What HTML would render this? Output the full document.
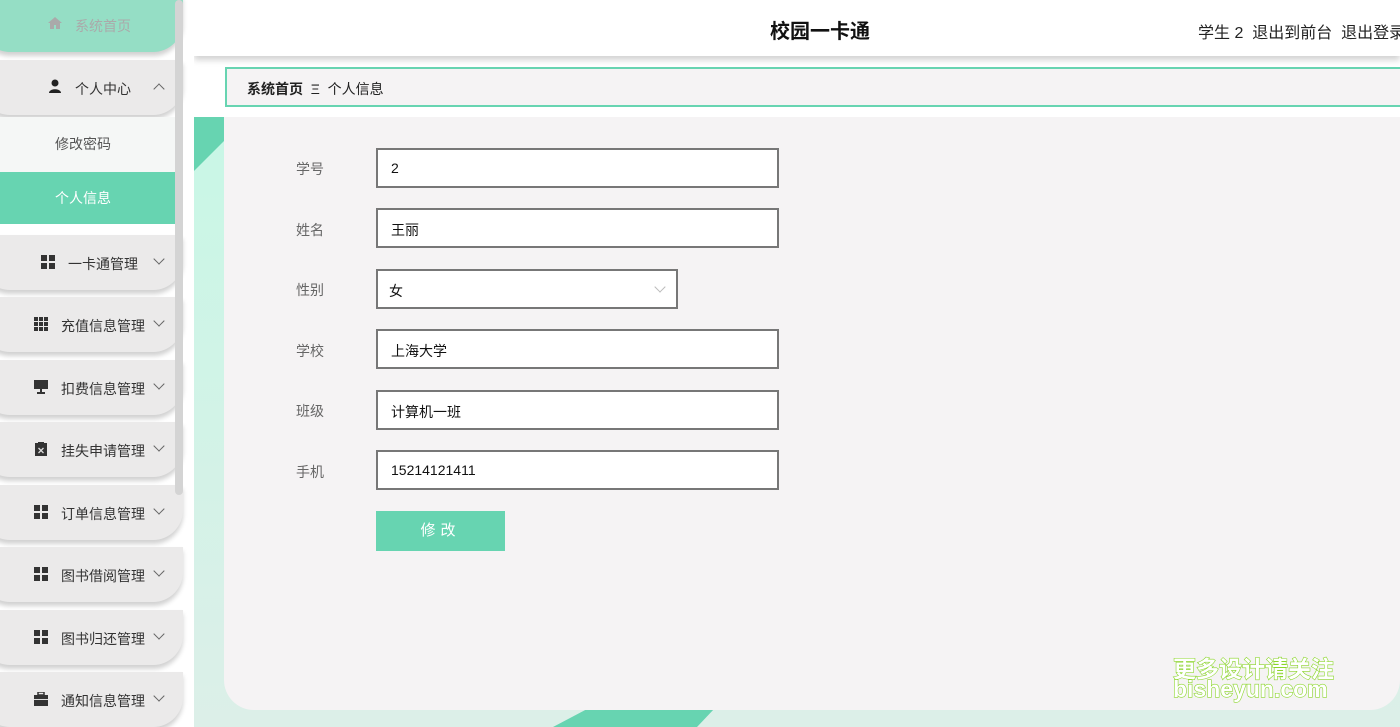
<!DOCTYPE html>
<html><head><meta charset="utf-8"><style>
*{margin:0;padding:0;box-sizing:border-box}
body{width:1400px;height:727px;overflow:hidden;position:relative;background:#fff;font-family:"Liberation Sans","Noto Sans CJK SC",sans-serif;}
.bgmint{position:absolute;left:194px;top:117px;width:1206px;height:610px;background:linear-gradient(180deg,#c8f7e6,#dcefe8)}
.diag1{position:absolute;left:194px;top:117px;width:30px;height:60px;background:#67d4b1;clip-path:polygon(0 0,100% 0,100% 40%,0 90%)}
.diag2{position:absolute;left:535px;top:708px;width:180px;height:19px;background:#67d4b1;clip-path:polygon(10% 100%,30% 0,100% 0,90% 100%)}
.card{position:absolute;left:224px;top:117px;width:1176px;height:593px;background:#f5f3f4;border-radius:0 0 30px 30px}
.header{position:absolute;left:194px;top:0;width:1206px;height:56px;background:#fff;box-shadow:0 4px 6px rgba(0,0,0,.18)}
.title{position:absolute;left:0;width:1252px;top:15px;text-align:center;font-size:20px;font-weight:bold;color:#111}
.bc{position:absolute;left:225px;top:67px;width:1180px;height:40px;border:2px solid #67d4b1;background:#f5f3f4;font-size:14px;color:#222;padding:10px 0 0 20px}
.side{position:absolute;left:0;top:0;width:194px;height:727px;background:#fff}
.sb{position:absolute;left:175px;top:0;width:8px;height:495px;background:#d4d4d4;border-radius:4px}
.item{position:absolute;left:-20px;width:203px;height:55px;background:#ebeaea;border-radius:0 0 30px 30px;box-shadow:0 4px 5px rgba(0,0,0,.18);font-size:14px;color:#333}
.item .t{position:absolute;top:19px;white-space:nowrap}
.item .ic{position:absolute;top:20px;width:14px;height:14px}
.item .ch{position:absolute;top:20px;left:175px;width:8px;height:8px;border-right:1px solid #666;border-bottom:1px solid #666;transform:rotate(45deg)}
.sub{position:absolute;left:0;width:183px;height:55px;font-size:14px;padding-left:55px;line-height:55px}
.lab{position:absolute;left:296px;font-size:14px;color:#666}
.inp{position:absolute;left:376px;width:403px;height:40px;border:2px solid #777;background:#fff;font-size:14px;color:#111;padding:10px 0 0 13px}
.btn{position:absolute;left:376px;top:511px;width:129px;height:40px;background:#67d4b1;color:#fff;font-size:15px;text-align:center;line-height:40px;letter-spacing:5px}
.wm{position:absolute;left:1173px;font-size:23px;font-weight:bold;color:#fff;-webkit-text-stroke:1.2px #8bd62a;paint-order:stroke fill}
</style></head><body>
<div class="bgmint"></div><div class="diag1"></div><div class="diag2"></div>
<div class="card"></div>
<div class="header"><div class="title">校园一卡通</div><div style="position:absolute;left:1004px;top:19px;font-size:16px;color:#222;white-space:nowrap">学生 2&nbsp;&nbsp;退出到前台&nbsp;&nbsp;退出登录</div></div>
<div class="bc"><b>系统首页</b>&nbsp;&nbsp;Ξ&nbsp;&nbsp;个人信息</div>

<div class="side">
<div class="item" style="top:-5px;height:57px;background:#95dec5;"><svg class="ic" style="left:68px;top:21px" viewBox="0 0 14 14"><path d="M7 1L0 7h2v6h4V9h2v4h4V7h2z" fill="#aaa"/></svg><span class="t" style="left:95px;top:21px;color:#aaa">系统首页</span></div>
<div class="item" style="top:60px"><svg class="ic" style="left:68px;top:19px" viewBox="0 0 14 14"><circle cx="7" cy="4" r="3.5" fill="#222"/><path d="M1 14c0-5 12-5 12 0z" fill="#222"/></svg><span class="t" style="left:95px">个人中心</span><div class="ch" style="transform:rotate(-135deg);top:25px"></div></div>
<div class="sub" style="top:117px;background:#f5f7f6;color:#555">修改密码</div>
<div class="sub" style="top:172px;height:52px;line-height:52px;background:#67d4b1;color:#fff">个人信息</div>
<div class="item" style="top:235px"><svg class="ic" style="left:61px" viewBox="0 0 14 14"><g fill="#333"><rect x="0" y="0" width="6" height="6"/><rect x="8" y="0" width="6" height="6"/><rect x="0" y="8" width="6" height="6"/><rect x="8" y="8" width="6" height="6"/></g></svg><span class="t" style="left:88px">一卡通管理</span><div class="ch"></div></div>
<div class="item" style="top:297px"><svg class="ic" style="left:54px" viewBox="0 0 14 14"><g fill="#333"><rect x="0" y="0" width="4" height="4"/><rect x="5" y="0" width="4" height="4"/><rect x="10" y="0" width="4" height="4"/><rect x="0" y="5" width="4" height="4"/><rect x="5" y="5" width="4" height="4"/><rect x="10" y="5" width="4" height="4"/><rect x="0" y="10" width="4" height="4"/><rect x="5" y="10" width="4" height="4"/><rect x="10" y="10" width="4" height="4"/></g></svg><span class="t" style="left:81px">充值信息管理</span><div class="ch"></div></div>
<div class="item" style="top:360px"><svg class="ic" style="left:54px" viewBox="0 0 14 14"><g fill="#333"><rect x="0" y="0" width="14" height="9"/><rect x="6" y="9" width="2" height="3"/><rect x="3" y="12" width="8" height="2"/></g></svg><span class="t" style="left:81px">扣费信息管理</span><div class="ch"></div></div>
<div class="item" style="top:422px"><svg class="ic" style="left:54px" viewBox="0 0 14 14"><rect x="1" y="1" width="12" height="13" fill="#333"/><rect x="4" y="0" width="6" height="3" fill="#333"/><path d="M4.5 6l5 5M9.5 6l-5 5" stroke="#ddd" stroke-width="1.3"/></svg><span class="t" style="left:81px">挂失申请管理</span><div class="ch"></div></div>
<div class="item" style="top:485px"><svg class="ic" style="left:54px" viewBox="0 0 14 14"><g fill="#333"><rect x="0" y="0" width="6" height="6"/><rect x="8" y="0" width="6" height="6"/><rect x="0" y="8" width="6" height="6"/><rect x="8" y="8" width="6" height="6"/></g></svg><span class="t" style="left:81px">订单信息管理</span><div class="ch"></div></div>
<div class="item" style="top:547px"><svg class="ic" style="left:54px" viewBox="0 0 14 14"><g fill="#333"><rect x="0" y="0" width="6" height="6"/><rect x="8" y="0" width="6" height="6"/><rect x="0" y="8" width="6" height="6"/><rect x="8" y="8" width="6" height="6"/></g></svg><span class="t" style="left:81px">图书借阅管理</span><div class="ch"></div></div>
<div class="item" style="top:610px"><svg class="ic" style="left:54px" viewBox="0 0 14 14"><g fill="#333"><rect x="0" y="0" width="6" height="6"/><rect x="8" y="0" width="6" height="6"/><rect x="0" y="8" width="6" height="6"/><rect x="8" y="8" width="6" height="6"/></g></svg><span class="t" style="left:81px">图书归还管理</span><div class="ch"></div></div>
<div class="item" style="top:672px"><svg class="ic" style="left:54px" viewBox="0 0 14 14"><g fill="#333"><rect x="4" y="0" width="6" height="3" fill="none" stroke="#333" stroke-width="1.5"/><rect x="0" y="3" width="14" height="11"/></g><rect x="0" y="7" width="14" height="1" fill="#ddd"/></svg><span class="t" style="left:81px">通知信息管理</span><div class="ch"></div></div>
<div class="sb"></div>
</div>

<div class="lab" style="top:159px">学号</div><div class="inp" style="top:148px">2</div>
<div class="lab" style="top:220px">姓名</div><div class="inp" style="top:208px">王丽</div>
<div class="lab" style="top:280px">性别</div><div class="inp" style="top:269px;width:302px;padding-left:11px">女<span style="position:absolute;left:278px;top:12px;width:8px;height:8px;border-right:1px solid #bbb;border-bottom:1px solid #bbb;transform:rotate(45deg)"></span></div>
<div class="lab" style="top:341px">学校</div><div class="inp" style="top:329px">上海大学</div>
<div class="lab" style="top:401px">班级</div><div class="inp" style="top:390px">计算机一班</div>
<div class="lab" style="top:462px">手机</div><div class="inp" style="top:450px">15214121411</div>
<div class="btn">修改</div>
<div class="wm" style="top:650px">更多设计请关注</div>
<div class="wm" style="top:676px">bisheyun.com</div>
</body></html>
